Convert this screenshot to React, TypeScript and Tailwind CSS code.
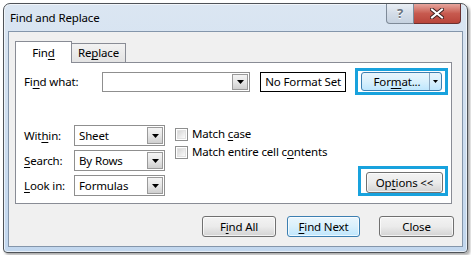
import React from "react";

const font = { fontFamily: '"Noto Sans", "Open Sans", sans-serif' };

function U({ children }: { children: React.ReactNode }) {
  return <span className="underline underline-offset-[2px] decoration-[1px]">{children}</span>;
}

function Arrow() {
  return (
    <svg width="7" height="4" viewBox="0 0 7 4">
      <path d="M0 0h7L3.5 4z" fill="#000" />
    </svg>
  );
}

function Combo({ text, width, height }: { text?: string; width: string; height: string }) {
  return (
    <div className={`${width} ${height} flex items-stretch border border-[#8f8f8f] bg-white`}>
      <div className="flex-1 flex items-center pl-[4px] text-black">{text}</div>
      <div className="w-[16px] m-[1px] flex items-center justify-center border border-[#9a9a9a] bg-gradient-to-b from-[#f4f4f4] via-[#e6e6e6] to-[#cfcfcf]">
        <Arrow />
      </div>
    </div>
  );
}

function Check({ children }: { children: React.ReactNode }) {
  return (
    <div className="h-[18px] flex items-center gap-[4px]">
      <div className="w-[13px] h-[13px] border border-[#8e8f8f] bg-white p-[1px]">
        <div className="w-full h-full border border-[#e2e2e2] bg-gradient-to-br from-[#d6d6d6] to-[#fbfbfb]" />
      </div>
      <span className="text-black">{children}</span>
    </div>
  );
}

function Btn({
  children,
  w,
  h = "h-[21px]",
  def = false,
}: {
  children: React.ReactNode;
  w: string;
  h?: string;
  def?: boolean;
}) {
  const skin = def
    ? "border-[#3c7fb1] bg-gradient-to-b from-[#eaf6fd] via-[#d9f0fc] to-[#bee6fd]"
    : "border-[#707070] bg-gradient-to-b from-[#f3f3f3] via-[#ebebeb] to-[#d3d3d3]";
  return (
    <div className={`${w} ${h} rounded-[3px] border ${skin} shadow-[inset_0_0_0_1px_rgba(255,255,255,0.7)] flex items-center justify-center text-black`}>
      {children}
    </div>
  );
}

export default function App() {
  return (
    <div className="w-[471px] h-[255px] bg-white pt-[3px] pl-[3px] text-[11.5px] tracking-[-0.15px]" style={font}>
      <div className="w-[465px] h-[250px] rounded-t-[7px] rounded-b-[4px] border border-[#4f5358] bg-gradient-to-b from-[#dbe6f2] to-[#c2d7ee] shadow-[inset_0_0_0_1px_rgba(255,255,255,0.6),2px_2px_3px_rgba(0,0,0,0.35)] flex flex-col">
        {/* title bar */}
        <div className="h-[27px] flex items-start">
          <div className="pl-[6px] pt-[7px] leading-[14px] text-black">Find and Replace</div>
          <div className="ml-auto mr-[6px] flex">
            <div className="w-[28px] h-[20px] rounded-bl-[4px] border border-t-0 border-[#7e8a98] bg-gradient-to-b from-[#e9eef4] via-[#d4dde8] to-[#c6d2e0] flex items-center justify-center text-[13px] font-bold text-[#6b7480] [text-shadow:0_1px_0_#fff]">
              ?
            </div>
            <div className="w-[47px] h-[20px] rounded-br-[4px] border border-t-0 border-l-0 border-[#6b3030] bg-gradient-to-b from-[#e6a59d] via-[#c75a4f] to-[#b8443a] flex items-center justify-center">
              <svg width="14" height="11" viewBox="0 0 14 11">
                <path d="M2 1.5l10 8M12 1.5l-10 8" stroke="#3c2020" strokeWidth="4" strokeLinecap="square" />
                <path d="M2 1.5l10 8M12 1.5l-10 8" stroke="#fff" strokeWidth="2" strokeLinecap="square" />
              </svg>
            </div>
          </div>
        </div>

        {/* client area */}
        <div className="mx-[4px] mb-[5px] flex-1 border border-[#8496ab] bg-[#f0f0f0] flex flex-col px-[6px]">
          {/* tabs */}
          <div className="mt-[8px] flex items-end h-[22px]">
            <div className="w-[57px] h-[22px] -mb-[1px] border border-b-0 border-[#898c95] bg-white z-10 flex items-center justify-center text-black">
              Fin<U>d</U>
            </div>
            <div className="w-[54px] h-[19px] border border-l-0 border-b-0 border-[#898c95] bg-gradient-to-b from-[#f2f2f2] to-[#e3e3e3] flex items-center justify-center text-black">
              Re<U>p</U>lace
            </div>
          </div>

          {/* panel */}
          <div className="w-[437px] border border-[#898c95] bg-white pt-[5px] pb-[7px] pl-[8px] pr-[3px] flex flex-col">
            <div className="h-[27px] flex items-center">
              <div className="w-[78px] text-black">
                Fi<U>n</U>d what:
              </div>
              <Combo width="w-[149px]" height="h-[20px]" />
              <div className="ml-[10px] w-[86px] h-[20px] border border-black bg-white flex items-center justify-center text-black">
                No Format Set
              </div>
              <div className="ml-[9px] border-[3px] border-[#18a2dd] px-[3px] py-[1px] flex">
                <div className="w-[81px] h-[19px] rounded-[3px] border border-[#3c7fb1] bg-gradient-to-b from-[#eaf6fd] via-[#d9f0fc] to-[#bee6fd] flex items-stretch text-black">
                  <div className="flex-1 flex items-center justify-center pl-[3px]">
                    For<U>m</U>at...
                  </div>
                  <div className="w-[12px] border-l border-[#8aa6bf] flex items-center justify-center">
                    <svg width="5" height="3" viewBox="0 0 5 3">
                      <path d="M0 0h5L2.5 3z" fill="#000" />
                    </svg>
                  </div>
                </div>
              </div>
            </div>

            <div className="mt-[30px] flex items-end">
              <div className="flex flex-col gap-[4px]">
                {[
                  [<>Wit<U>h</U>in:</>, "Sheet"],
                  [<><U>S</U>earch:</>, "By Rows"],
                  [<><U>L</U>ook in:</>, "Formulas"],
                ].map(([label, val], i) => (
                  <div key={i} className="flex items-center">
                    <div className="w-[50px] text-black">{label}</div>
                    <Combo text={val as string} width="w-[91px]" height="h-[21px]" />
                  </div>
                ))}
              </div>
              <div className="ml-[10px] self-start flex flex-col">
                <Check>
                  Match <U>c</U>ase
                </Check>
                <Check>
                  Match entire cell c<U>o</U>ntents
                </Check>
              </div>
              <div className="ml-auto border-[3px] border-[#18a2dd] pl-[5px] pr-[2px] pt-[3px] flex">
                <Btn w="w-[77px]">
                  Op<U>t</U>ions &lt;&lt;
                </Btn>
              </div>
            </div>
          </div>

          {/* bottom buttons */}
          <div className="mt-[12px] flex justify-end pr-[2px]">
            <Btn w="w-[74px]">
              F<U>i</U>nd All
            </Btn>
            <div className="ml-[11px]">
              <Btn w="w-[73px]" def>
                <U>F</U>ind Next
              </Btn>
            </div>
            <div className="ml-[19px]">
              <Btn w="w-[75px]">Close</Btn>
            </div>
          </div>
        </div>
      </div>
    </div>
  );
}
